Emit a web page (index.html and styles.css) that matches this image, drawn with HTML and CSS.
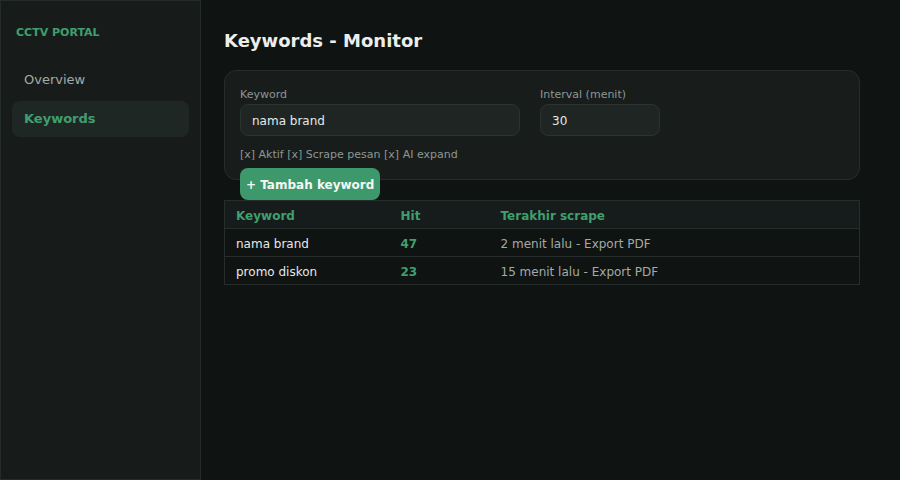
FILE: index.html
```html
<!DOCTYPE html>
<html>
<head>
<meta charset="utf-8">
<link rel="stylesheet" href="styles.css">
</head>
<body>
<div class="app">
  <aside class="sidebar">
    <div class="brand">CCTV PORTAL</div>
    <nav class="nav">
      <div class="nav-item">Overview</div>
      <div class="nav-item active">Keywords</div>
    </nav>
  </aside>
  <main class="main">
    <h1 class="title">Keywords - Monitor</h1>
    <div class="card">
      <div class="fields">
        <div class="field field-keyword">
          <div class="label">Keyword</div>
          <div class="input">nama brand</div>
        </div>
        <div class="field field-interval">
          <div class="label">Interval (menit)</div>
          <div class="input">30</div>
        </div>
      </div>
      <div class="checks">[x] Aktif [x] Scrape pesan [x] AI expand</div>
      <button class="btn">+ Tambah keyword</button>
    </div>
    <table class="table">
      <thead>
        <tr><th class="c1">Keyword</th><th class="c2">Hit</th><th>Terakhir scrape</th></tr>
      </thead>
      <tbody>
        <tr><td>nama brand</td><td class="hit">47</td><td class="muted">2 menit lalu - Export PDF</td></tr>
        <tr><td>promo diskon</td><td class="hit">23</td><td class="muted">15 menit lalu - Export PDF</td></tr>
      </tbody>
    </table>
  </main>
</div>
</body>
</html>
```
FILE: styles.css
```css
* { box-sizing: border-box; }
html, body { margin: 0; padding: 0; }
body {
  background: #0f1312;
  font-family: "DejaVu Sans", sans-serif;
  color: #e6e9e8;
  width: 900px;
  height: 480px;
  overflow: hidden;
}
.app { display: flex; height: 480px; }
.sidebar {
  width: 201px;
  flex: none;
  background: #171c1b;
  border: 1px solid #252b29;
  padding: 24px 11px;
}
.brand {
  font-size: 11px;
  font-weight: bold;
  color: #3f9f6e;
  padding-left: 4px;
  line-height: 16px;
}
.nav { margin-top: 21px; display: flex; flex-direction: column; gap: 3px; }
.nav-item {
  height: 36px;
  line-height: 36px;
  padding-left: 12px;
  font-size: 13px;
  color: #a3aaa7;
  border-radius: 8px;
}
.nav-item.active {
  background: #1f2725;
  color: #3f9f6e;
  font-weight: bold;
}
.main { flex: 1; padding: 30px 40px 0 23px; }
.title {
  margin: 0;
  font-size: 18px;
  font-weight: bold;
  line-height: 22px;
  color: #eceeed;
}
.card {
  margin-top: 18px;
  height: 110px;
  background: #181d1c;
  border: 1px solid #262d2b;
  border-radius: 12px;
  padding: 17px 15px 0;
}
.fields { display: flex; gap: 20px; }
.field-keyword { width: 280px; }
.field-interval { width: 120px; }
.label {
  font-size: 11px;
  color: #8d9692;
  line-height: 14px;
  margin-bottom: 2px;
}
.input {
  height: 32px;
  line-height: 30px;
  padding-top: 1px;
  background: #1e2523;
  border: 1px solid #2b3330;
  border-radius: 8px;
  padding-left: 11px;
  font-size: 12px;
  color: #e6e9e8;
}
.checks {
  margin-top: 11px;
  font-size: 11px;
  color: #8d9692;
  line-height: 16px;
}
.btn {
  display: block;
  margin-top: 5px;
  height: 32px;
  padding: 2px 6px 0;
  border: none;
  border-radius: 8px;
  background: #3d996b;
  color: #f4f7f5;
  font-family: "DejaVu Sans", sans-serif;
  font-size: 12px;
  font-weight: bold;
  position: relative;
}
.table {
  margin-top: 20px;
  width: 636px;
  border-collapse: collapse;
  font-size: 12px;
  border: 1px solid #262d2b;
}
.table th, .table td {
  height: 28px;
  padding: 3px 11px 0;
  text-align: left;
  border-bottom: 1px solid #262d2b;
}
.table th {
  background: #161c1b;
  color: #3f9f6e;
  font-weight: bold;
}
.table td { background: #0f1312; color: #e6e9e8; }
.c1 { width: 165px; }
.c2 { width: 100px; }
.table td.hit { color: #3f9f6e; font-weight: bold; }
.table td.muted { color: #a3aaa7; }
```
